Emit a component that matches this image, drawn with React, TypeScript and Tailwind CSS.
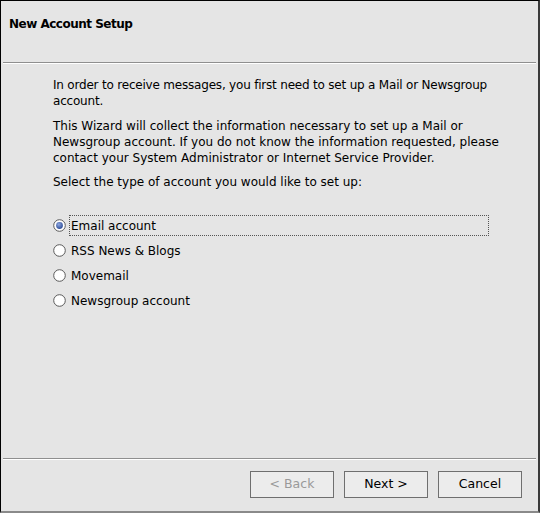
import { useState } from "react";

const accountTypes = [
  "Email account",
  "RSS News & Blogs",
  "Movemail",
  "Newsgroup account",
];

function Radio({ checked }: { checked: boolean }) {
  return (
    <svg width="13" height="13" viewBox="0 0 13 13" className="shrink-0">
      <defs>
        <radialGradient id="dot" cx="40%" cy="35%" r="65%">
          <stop offset="0%" stopColor="#8fa8e0" />
          <stop offset="100%" stopColor="#2f4f9a" />
        </radialGradient>
      </defs>
      <circle cx="6.5" cy="6.5" r="5.8" fill="#ffffff" stroke="#5a5a5a" strokeWidth="1" />
      {checked && <circle cx="6.5" cy="6.5" r="3.4" fill="url(#dot)" />}
    </svg>
  );
}

function Separator() {
  return (
    <div className="mx-[2px] flex flex-col">
      <div className="h-px bg-[#8f8f8f]" />
      <div className="h-px bg-white" />
    </div>
  );
}

function WizardButton({
  label,
  disabled,
}: {
  label: string;
  disabled?: boolean;
}) {
  return (
    <button
      disabled={disabled}
      className={`h-[27px] w-[84px] border border-[#6f6f6f] bg-[#ececec] text-[12.5px] ${
        disabled ? "text-[#9a9a9a]" : "text-black"
      }`}
    >
      {label}
    </button>
  );
}

export default function App() {
  const [selected, setSelected] = useState(0);

  return (
    <div
      className="flex h-[513px] w-[540px] flex-col border-t border-l border-t-black border-l-black border-r-2 border-b-2 border-r-[#3a3a3a] border-b-[#8a8a8a] bg-[#e5e5e5] text-black"
      style={{ fontFamily: '"DejaVu Sans", sans-serif' }}
    >
      <div className="flex h-[61px] items-start px-2 pt-[14px]">
        <h1 className="text-[12px] font-bold tracking-[-0.5px]">New Account Setup</h1>
      </div>
      <Separator />

      <main className="flex flex-1 flex-col whitespace-nowrap pl-[52px] pt-[13px] text-[12px] leading-[16px]">
        <p className="tracking-[-0.2px]">
          In order to receive messages, you first need to set up a Mail or Newsgroup
          <br />
          account.
        </p>
        <p className="mt-[9px]">
          This Wizard will collect the information necessary to set up a Mail or
          <br />
          Newsgroup account. If you do not know the information requested, please
          <br />
          contact your System Administrator or Internet Service Provider.
        </p>
        <p className="mt-[8px]">Select the type of account you would like to set up:</p>

        <div className="mt-[23px] flex flex-col">
          {accountTypes.map((name, i) => (
            <label
              key={name}
              onClick={() => setSelected(i)}
              className="flex h-[25px] items-center gap-[3px]"
            >
              <Radio checked={selected === i} />
              <span
                className={`flex h-[21px] items-center pl-[1px] ${
                  i === 0
                    ? "w-[420px] border border-dotted border-[#555]"
                    : "border border-transparent"
                }`}
              >
                {name}
              </span>
            </label>
          ))}
        </div>
      </main>

      <Separator />
      <footer className="flex h-[51px] items-start justify-end gap-[10px] pr-[16px] pt-[11px]">
        <WizardButton label="< Back" disabled />
        <WizardButton label="Next >" />
        <WizardButton label="Cancel" />
      </footer>
    </div>
  );
}
